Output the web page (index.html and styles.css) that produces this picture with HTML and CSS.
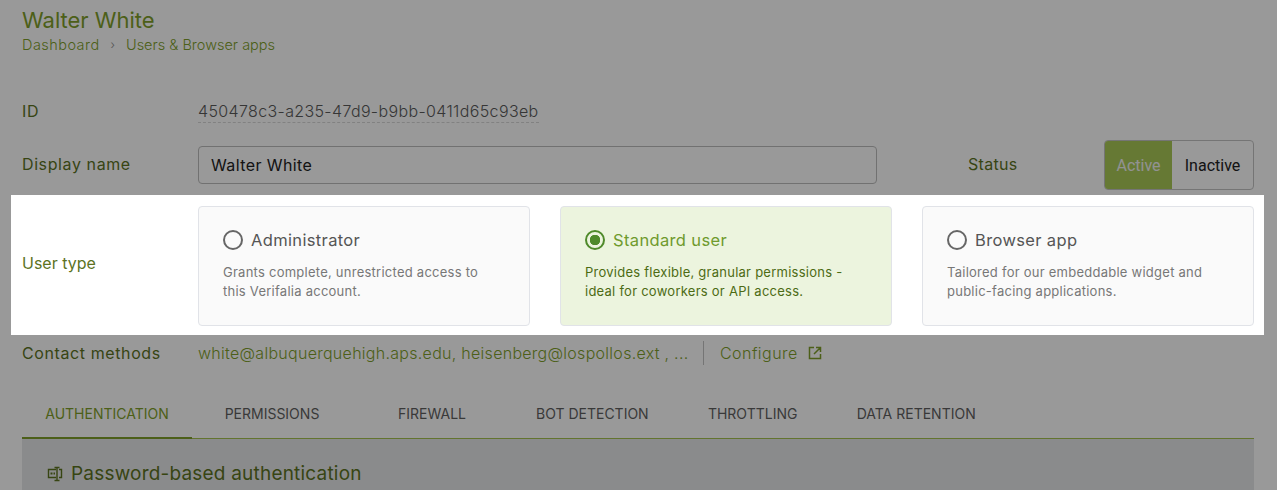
FILE: index.html
```html
<!DOCTYPE html>
<html lang="en">
<head>
<meta charset="utf-8">
<title>Walter White</title>
<link rel="stylesheet" href="styles.css">
</head>
<body>
<main class="page">
  <header class="page-head">
    <h1 class="title">Walter White</h1>
    <nav class="crumbs"><span class="crumb-home">Dashboard</span><span class="sep">›</span><span>Users &amp; Browser apps</span></nav>
  </header>

  <div class="row row-id">
    <div class="label">ID</div>
    <div class="id-value">450478c3-a235-47d9-b9bb-0411d65c93eb</div>
  </div>

  <div class="row row-name">
    <div class="label">Display name</div>
    <div class="input">Walter White</div>
    <div class="status-label">Status</div>
    <div class="toggle"><span class="toggle-on">Active</span><span class="toggle-off">Inactive</span></div>
  </div>

  <div class="row row-type">
    <div class="label label-type">User type</div>
    <div class="cards">
      <div class="card">
        <div class="card-head"><span class="radio"></span><span class="card-title">Administrator</span></div>
        <p class="card-text">Grants complete, unrestricted access to this Verifalia account.</p>
      </div>
      <div class="card card-selected">
        <div class="card-head"><span class="radio radio-selected"></span><span class="card-title">Standard user</span></div>
        <p class="card-text">Provides flexible, granular permissions - ideal for coworkers or API access.</p>
      </div>
      <div class="card">
        <div class="card-head"><span class="radio"></span><span class="card-title">Browser app</span></div>
        <p class="card-text">Tailored for our embeddable widget and public-facing applications.</p>
      </div>
    </div>
  </div>

  <div class="row row-contact">
    <div class="label">Contact methods</div>
    <div class="contacts">white@albuquerquehigh.aps.edu, heisenberg@lospollos.ext , ...</div>
    <a class="configure">Configure
      <svg class="ext-icon" viewBox="0 0 14 14" width="14" height="14" aria-hidden="true"><path d="M6 1.500H1.500v11h11V8M8 1.500h4.500V6M12.500 1.500 6 8" fill="none" stroke="currentColor" stroke-width="1.500"/></svg>
    </a>
  </div>

  <div class="tabs">
    <span class="tab tab-active">AUTHENTICATION</span>
    <span class="tab">PERMISSIONS</span>
    <span class="tab">FIREWALL</span>
    <span class="tab">BOT DETECTION</span>
    <span class="tab">THROTTLING</span>
    <span class="tab">DATA RETENTION</span>
  </div>

  <section class="panel">
    <h2 class="panel-title">
      <svg class="pw-icon" viewBox="0 0 16 16" width="16" height="16" aria-hidden="true"><path d="M9 3.500H1.500v8H9M12 3.500h2.500v8H12M10 1.500v13M7.500 1.500h5M7.500 14.500h5" fill="none" stroke="currentColor" stroke-width="1.400"/><path d="M3.500 6.500h2v2h-2zM6.500 6.500h1.500v2H6.500z" fill="currentColor"/></svg>
      Password-based authentication
    </h2>
  </section>
</main>
<div class="spotlight"></div>
</body>
</html>
```
FILE: styles.css
```css
* { box-sizing: border-box; }
html, body { margin: 0; height: 490px; overflow: hidden; background: #fff; }
body { font-family: Inter, "Open Sans", sans-serif; color: #1c1c1c; }

.page { padding: 0 23px 0 22px; }

.page-head { height: 74px; padding-top: 8px; }
.title { margin: 0; font-size: 22px; line-height: 24px; font-weight: 400; color: #7f9f2b; }
.crumbs { display: flex; gap: 11px; margin-top: 2px; font-size: 14.500px; line-height: 22px; font-weight: 300; color: #7f9f2b; }
.crumb-home { letter-spacing: .45px; }
.sep { color: #8a8a8a; font-size: 12px; }

.row { display: flex; align-items: center; }
.label { flex: 0 0 176px; font-size: 16px; letter-spacing: .6px; color: #5d731f; }
.label-type { letter-spacing: 0; padding-bottom: 6px; }

.row-id { height: 74px; }
.id-value { font-size: 16px; letter-spacing: .36px; font-weight: 300; color: #5a5a5a; border-bottom: 1px dashed #d8d8d8; line-height: 22px; }

.row-name { height: 50px; margin-top: -8px; }
.row-name .label { padding-bottom: 2px; }
.input { flex: 0 0 679px; height: 38px; border: 1px solid #bdbdbd; border-radius: 4px; padding: 0 12px; display: flex; align-items: center; font-size: 16px; letter-spacing: .4px; color: #222; }
.status-label { margin-left: 91px; flex: 0 0 136px; padding-bottom: 2px; font-size: 16px; letter-spacing: .3px; color: #5d731f; }
.toggle { display: flex; flex: 0 0 150px; height: 50px; border: 1px solid #c4c4c4; border-radius: 4px; overflow: hidden; font-size: 16px; font-family: Roboto, sans-serif; }
.toggle-on { flex: 0 0 67px; background: #aaca58; color: #f4f4f4; display: flex; align-items: center; justify-content: center; }
.toggle-off { flex: 1; display: flex; align-items: center; justify-content: center; color: #222; }

.row-type { height: 120px; margin-top: 16px; }
.cards { display: flex; gap: 30px; flex: 1; }
.card { flex: 1; height: 120px; padding: 23px 24px; background: #fafafa; border: 1px solid #e1e3e8; border-radius: 4px; }
.card-selected { background: #ecf4de; }
.card-head { display: flex; align-items: center; gap: 8px; height: 20px; }
.radio { flex: 0 0 20px; height: 20px; border: 2px solid #666; border-radius: 50%; }
.radio-selected { border-color: #4f8a2b; background: radial-gradient(circle, #4f8a2b 0 5px, transparent 5.500px); }
.card-title { font-size: 16.500px; letter-spacing: .35px; color: #555; }
.card-selected .card-title { color: #6f9a2d; }
.card-text { margin: 13px 0 0; padding-right: 6px; font-size: 13px; letter-spacing: .25px; line-height: 19px; color: #777; }
.card-selected .card-text { color: #4c6b14; }

.row-contact { height: 48px; margin-top: 3px; }
.contacts { flex: 0 0 505px; font-size: 16px; letter-spacing: .28px; font-weight: 300; color: #7f9f2b; white-space: nowrap; overflow: hidden; }
.configure { padding-left: 16px; height: 24px; border-left: 1px solid #c4c4c4; display: flex; align-items: center; gap: 10px; font-size: 16px; letter-spacing: .45px; font-weight: 300; color: #7f9f2b; }
.ext-icon { display: block; }

.tabs { display: flex; height: 44px; margin-top: 18px; border-bottom: 1px solid #a6c14f; }
.tab { min-width: 160px; padding: 0 24px 6px; display: flex; align-items: center; justify-content: center; font-size: 14px; color: #5f5f5f; }
.tab-active { color: #7f9f2b; min-width: 170px; height: 44px; padding: 0 22px 5px; border-bottom: 2px solid #7f9f2b; }

.panel { height: 60px; background: #e6e8ea; padding: 23px 25px 0; }
.panel-title { display: flex; align-items: center; gap: 8px; margin: 0; font-size: 19px; letter-spacing: .2px; line-height: 24px; font-weight: 400; color: #5d731f; }
.pw-icon { display: block; }

.spotlight { position: absolute; left: 11px; top: 195px; width: 1253px; height: 140px; box-shadow: 0 0 0 2000px rgba(0,0,0,.4); }
```
